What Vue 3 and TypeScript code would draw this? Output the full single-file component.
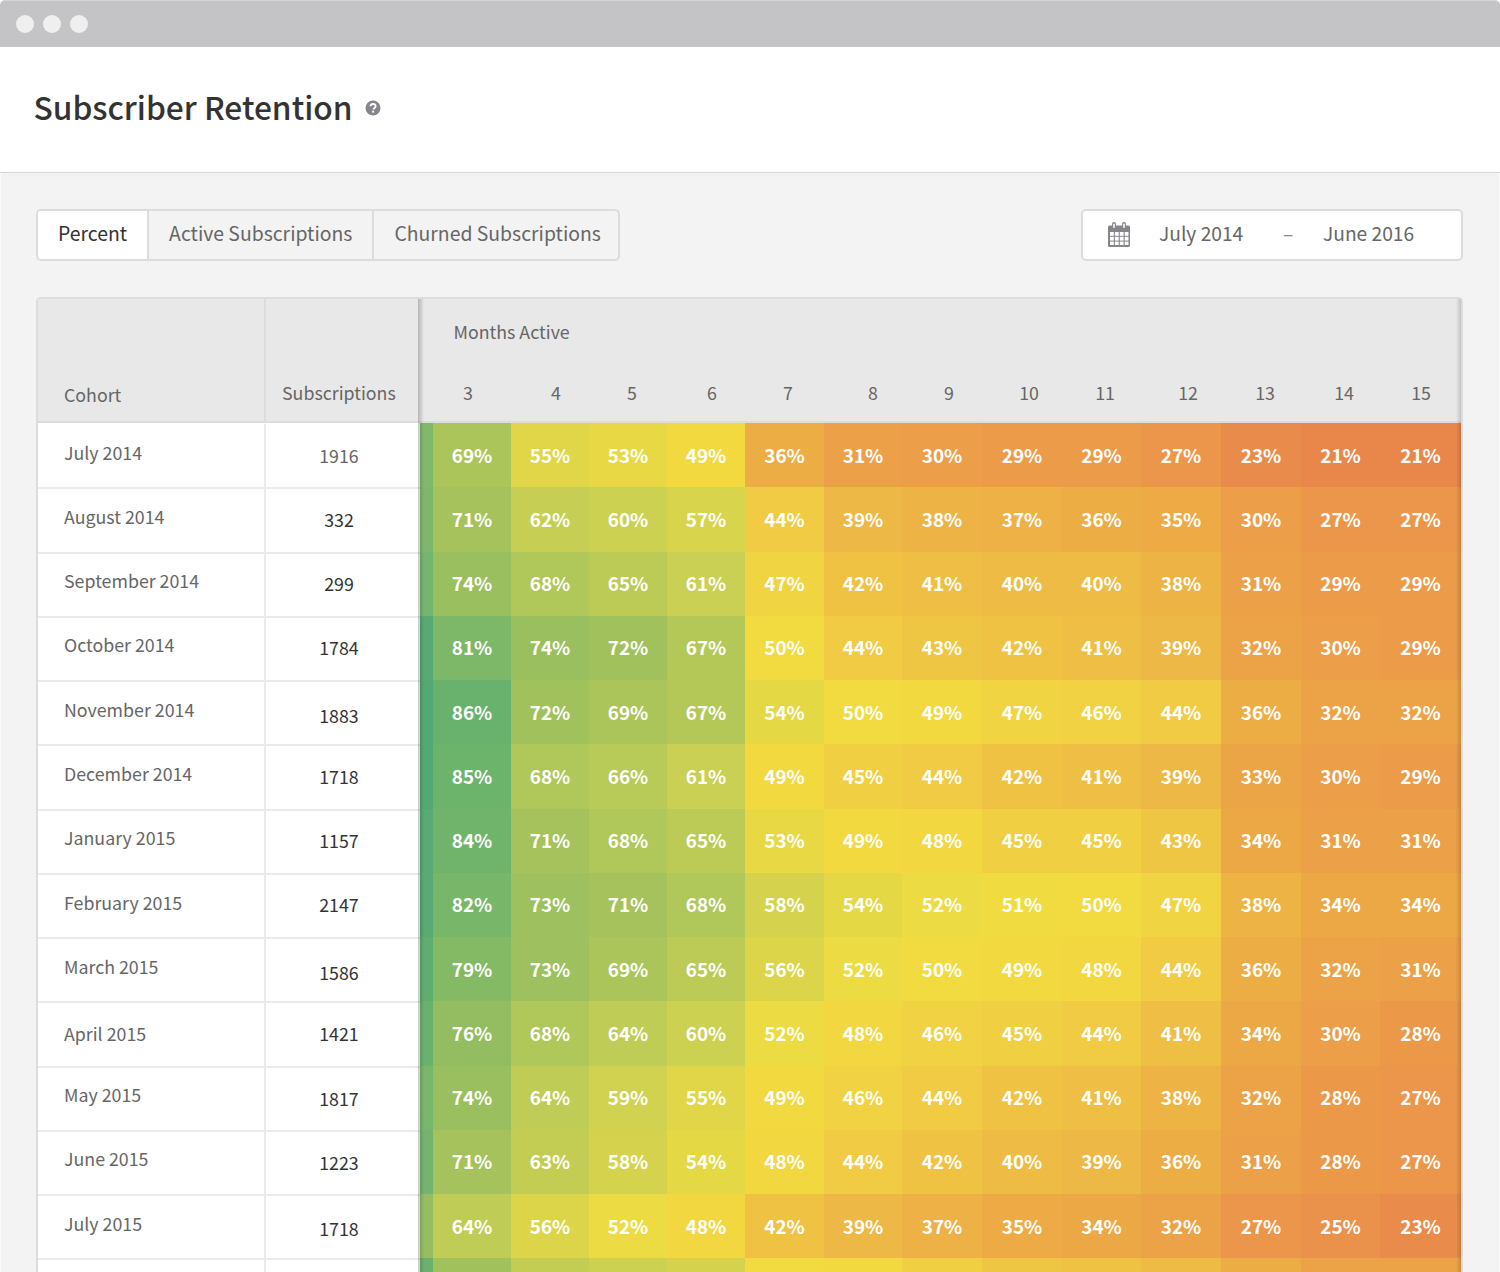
<script setup lang="ts">
const tabs = ['Percent', 'Active Subscriptions', 'Churned Subscriptions']

interface Row {
  name: string
  subs: string
  nameDy: number
  subsDy: number
  stub: string
  values: number[]
  hidden?: boolean
}

const raw: [string, string, number, number, string, number[]][] = [
  ['July 2014', '1916', -3, 0, '#83b86c', [69, 55, 53, 49, 36, 31, 30, 29, 29, 27, 23, 21, 21]],
  ['August 2014', '332', -3, 0, '#7eb76c', [71, 62, 60, 57, 44, 39, 38, 37, 36, 35, 30, 27, 27]],
  ['September 2014', '299', -4, -1, '#75b56e', [74, 68, 65, 61, 47, 42, 41, 40, 40, 38, 31, 29, 29]],
  ['October 2014', '1784', -4, -1, '#57ab72', [81, 74, 72, 67, 50, 44, 43, 42, 41, 39, 32, 30, 29]],
  ['November 2014', '1883', -3, 3, '#52a973', [86, 72, 69, 67, 54, 50, 49, 47, 46, 44, 36, 32, 32]],
  ['December 2014', '1718', -3, 0, '#52a973', [85, 68, 66, 61, 49, 45, 44, 42, 41, 39, 33, 30, 29]],
  ['January 2015', '1157', -4, -1, '#58ab72', [84, 71, 68, 65, 53, 49, 48, 45, 45, 43, 34, 31, 31]],
  ['February 2015', '2147', -3, -1, '#58ab72', [82, 73, 71, 68, 58, 54, 52, 51, 50, 47, 38, 34, 34]],
  ['March 2015', '1586', -3, 3, '#5fae70', [79, 73, 69, 65, 56, 52, 50, 49, 48, 44, 36, 32, 31]],
  ['April 2015', '1421', 0, 0, '#6bb16e', [76, 68, 64, 60, 52, 48, 46, 45, 44, 41, 34, 30, 28]],
  ['May 2015', '1817', -4, 0, '#7ab66c', [74, 64, 59, 55, 49, 46, 44, 42, 41, 38, 32, 28, 27]],
  ['June 2015', '1223', -4, 0, '#74b46e', [71, 63, 58, 54, 48, 44, 42, 40, 39, 36, 31, 28, 27]],
  ['July 2015', '1718', -3, 2, '#96bd64', [64, 56, 52, 48, 42, 39, 37, 35, 34, 32, 27, 25, 23]],
  ['', '', 0, 0, '#6bb06c', [72, 63, 60, 58, 50, 49, 45, 43, 42, 40, 36, 32, 32]],
]

const rows: Row[] = raw.map(([name, subs, nameDy, subsDy, stub, values]) => ({
  name,
  subs,
  nameDy,
  subsDy,
  stub,
  values,
  hidden: name === '',
}))

const ramp: [number, number[]][] = [
  [21, [233, 135, 75]],
  [23, [233, 140, 75]],
  [27, [235, 150, 74]],
  [31, [236, 160, 71]],
  [36, [237, 173, 69]],
  [39, [237, 184, 69]],
  [42, [239, 194, 68]],
  [45, [240, 207, 66]],
  [49, [242, 217, 64]],
  [51, [240, 220, 64]],
  [55, [224, 214, 71]],
  [60, [205, 209, 82]],
  [65, [188, 203, 86]],
  [69, [172, 197, 90]],
  [71, [165, 194, 92]],
  [76, [147, 189, 96]],
  [81, [124, 184, 104]],
  [86, [104, 178, 109]],
]

function heat(v: number): string {
  let i = 0
  while (i < ramp.length - 2 && v > ramp[i + 1][0]) i++
  const [a, ca] = ramp[i]
  const [b, cb] = ramp[i + 1]
  const t = Math.min(1, Math.max(0, (v - a) / (b - a)))
  const c = ca.map((x, k) => Math.round(x + (cb[k] - x) * t))
  return `rgb(${c[0]}, ${c[1]}, ${c[2]})`
}

const centres = [468, 556, 632, 712, 788, 873, 949, 1029, 1105, 1188, 1265, 1344, 1421]
const labels = [3, 4, 5, 6, 7, 8, 9, 10, 11, 12, 13, 14, 15]
function edge(i: number): number {
  let e = 420
  for (let k = 0; k < i; k++) e = 2 * centres[k] - e
  return e
}
const months = labels.map((label, i) => ({ label, width: edge(i + 1) - edge(i) }))
</script>

<template>
  <div class="window">
    <div class="titlebar">
      <span class="dot"></span>
      <span class="dot"></span>
      <span class="dot"></span>
    </div>
    <header class="head">
      <h1 class="title">Subscriber Retention</h1>
      <svg class="help" width="16" height="16" viewBox="0 0 16 16">
        <circle cx="8" cy="8" r="7.5" fill="#85858b" />
        <path d="M5.5 6.2C5.6 4.8 6.6 4 8 4c1.500 0 2.600.9 2.600 2.200 0 1-.6 1.500-1.300 2-.6.4-.8.7-.8 1.400" fill="none" stroke="#fff" stroke-width="1.800" />
        <rect x="7.100" y="10.600" width="2" height="2" fill="#fff" />
      </svg>
    </header>
    <main class="content">
      <div class="toolbar">
        <div class="tabs">
          <div v-for="(t, i) in tabs" :key="t" class="tab" :class="{ active: i === 0 }">{{ t }}</div>
        </div>
        <div class="range">
          <svg class="cal" width="24" height="26" viewBox="0 0 24 26">
            <path d="M2.500 3.500h2.500V2a2 2 0 0 1 4 0v1.500h6V2a2 2 0 0 1 4 0v1.500h2.500a1.500 1.500 0 0 1 1.500 1.500v18.500a1.500 1.500 0 0 1-1.500 1.500h-19A1.500 1.500 0 0 1 1 23.500V5a1.500 1.500 0 0 1 1.500-1.500z" fill="#85858b" />
            <rect x="6.200" y="1.500" width="1.600" height="4.500" rx=".8" fill="#fff" />
            <rect x="16.200" y="1.500" width="1.600" height="4.500" rx=".8" fill="#fff" />
            <g fill="#fff">
              <rect x="3" y="10" width="3.800" height="3.800" /><rect x="7.900" y="10" width="3.800" height="3.800" /><rect x="12.800" y="10" width="3.800" height="3.800" /><rect x="17.700" y="10" width="3.800" height="3.800" />
              <rect x="3" y="14.800" width="3.800" height="3.800" /><rect x="7.900" y="14.800" width="3.800" height="3.800" /><rect x="12.800" y="14.800" width="3.800" height="3.800" /><rect x="17.700" y="14.800" width="3.800" height="3.800" />
              <rect x="3" y="19.600" width="3.800" height="3.400" /><rect x="7.900" y="19.600" width="3.800" height="3.400" /><rect x="12.800" y="19.600" width="3.800" height="3.400" /><rect x="17.700" y="19.600" width="3.800" height="3.400" />
            </g>
          </svg>
          <span class="from">July 2014</span>
          <span class="dash">–</span>
          <span class="to">June 2016</span>
        </div>
      </div>

      <section class="table">
        <div class="thead">
          <div class="th cohort">Cohort</div>
          <div class="th subs">Subscriptions</div>
          <div class="th active">
            <div class="active-title">Months Active</div>
            <div class="month-row">
              <span v-for="m in months" :key="m.label" class="month" :style="{ width: m.width + 'px' }">{{ m.label }}</span>
            </div>
          </div>
        </div>
        <div class="tbody">
          <div v-for="(r, ri) in rows" :key="ri" class="row">
            <div class="cell name"><span :style="{ transform: `translateY(${r.nameDy}px)` }">{{ r.name }}</span></div>
            <div class="cell count" :class="{ muted: ri === 0 }"><span :style="{ transform: `translateY(${r.subsDy}px)` }">{{ r.subs }}</span></div>
            <div class="stub" :style="{ background: r.stub }"></div>
            <div v-for="(v, vi) in r.values" :key="vi" class="pct" :style="{ background: heat(v) }">
              <span v-if="!r.hidden">{{ v }}%</span>
            </div>
          </div>
        </div>
        <div class="shade-left"></div>
        <div class="shade-right"></div>
      </section>
    </main>
  </div>
</template>

<style>
html, body {
  margin: 0;
  background: #fff;
  overflow: hidden;
}
</style>

<style scoped>
* {
  box-sizing: border-box;
}
.window {
  width: 1500px;
  height: 1272px;
  overflow: hidden;
  background: #fff;
  font-family: "Noto Sans CJK SC", "Noto Sans CJK JP", "Noto Sans", sans-serif;
  color: #666;
}
.titlebar {
  height: 47px;
  background: #c4c4c6;
  border-radius: 5px 5px 0 0;
  border-top: 1px solid #d4d4d6;
  display: flex;
  align-items: center;
  gap: 9px;
  padding-left: 16px;
}
.dot {
  width: 18px;
  height: 18px;
  border-radius: 50%;
  background: #efefef;
}
.head {
  height: 126px;
  display: flex;
  align-items: center;
  padding: 0 0 7px 33.500px;
  gap: 12.500px;
  border-bottom: 1px solid #d6d6d6;
}
.title {
  margin: 0;
  font-size: 31.700px;
  line-height: 40px;
  font-weight: 500;
  color: #333;
}
.help {
  flex: none;
  margin-top: 4px;
}
.content {
  height: 1099px;
  background: #f3f3f3;
  padding: 36px 36px 0 35px;
  border-left: 1px solid #fafafa;
  border-right: 1px solid #fafafa;
}
.toolbar {
  display: flex;
  justify-content: space-between;
  align-items: flex-start;
  height: 52px;
}
.tabs {
  display: flex;
  height: 52px;
  border: 2px solid #dcdcdc;
  border-radius: 5px;
  overflow: hidden;
}
.tab {
  font-size: 19.400px;
  line-height: 44px;
  padding: 0 20px;
  border-left: 2px solid #dcdcdc;
  color: #666;
}
.tab:first-child {
  border-left: 0;
}
.tab:last-child {
  padding-right: 17px;
}
.tab.active {
  background: #fff;
  color: #333;
}
.range {
  width: 382px;
  height: 52px;
  background: #fff;
  border: 2px solid #dcdcdc;
  border-radius: 5px;
  display: flex;
  align-items: center;
  font-size: 19.200px;
  line-height: 44px;
  padding: 0 0 4px 24px;
}
.cal {
  flex: none;
  margin: 4px 28px 0 0;
}
.from {
  width: 124px;
}
.dash {
  width: 40px;
  color: #888;
}
.table {
  position: relative;
  margin-top: 36px;
  width: 1427px;
  border: 2px solid #dcdcdc;
  border-bottom: 0;
  border-radius: 5px 5px 0 0;
  background: #fff;
}
.thead {
  display: grid;
  grid-template-columns: 228px 154px 1041px;
  height: 124px;
  background: #e8e8e8;
  border-bottom: 2px solid #dcdcdc;
  font-size: 17.800px;
}
.th {
  display: flex;
  align-items: flex-end;
}
.th.cohort {
  padding: 0 0 14px 26px;
  border-right: 2px solid #dcdcdc;
}
.th.subs {
  padding: 0 0 16px 16px;
}
.th.active {
  display: block;
}
.active-title {
  height: 61px;
  padding: 18px 0 0 33.500px;
  line-height: 28px;
}
.month-row {
  display: flex;
  height: 61px;
}
.month {
  flex: none;
  text-align: center;
  line-height: 28px;
  padding-top: 18px;
}
.row {
  display: grid;
  grid-template-columns: 228px 154px 13px 78px 78px 78px 78px 79px 78px 80px 80px 79px 80px 80px 79px 81px;
  height: 64.250px;
}
.cell {
  display: flex;
  align-items: center;
  background: #fff;
  border-top: 2px solid #ebebeb;
  padding-bottom: 2px;
  font-size: 17.800px;
}
.row:first-child .cell {
  border-top-color: #fff;
}
.cell span {
  display: block;
}
.name {
  padding-left: 26px;
  border-right: 2px solid #ebebeb;
}
.count {
  justify-content: center;
  padding-right: 8px;
  color: #333;
}
.count.muted {
  color: #666;
}
.pct {
  display: flex;
  align-items: center;
  justify-content: center;
  color: #fff;
  font-size: 18.900px;
  font-weight: 700;
}
.pct span {
  display: block;
  transform: translateY(-1.500px);
}
.shade-left {
  position: absolute;
  left: 380px;
  top: 0;
  bottom: 0;
  width: 6px;
  background: linear-gradient(to right, rgba(0, 0, 0, 0.22), rgba(0, 0, 0, 0));
}
.shade-right {
  position: absolute;
  right: 0;
  top: 0;
  bottom: 0;
  width: 5px;
  background: linear-gradient(to left, rgba(0, 0, 0, 0.16), rgba(0, 0, 0, 0));
}
</style>
